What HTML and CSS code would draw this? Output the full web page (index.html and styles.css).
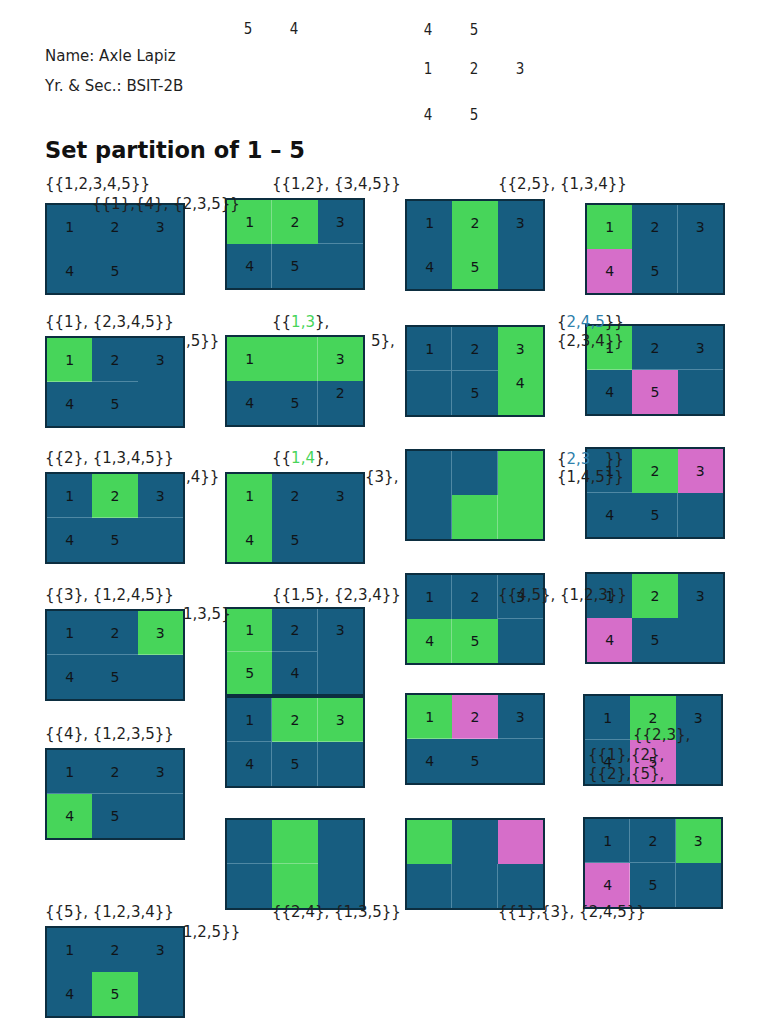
FILE: index.html
```html
<!DOCTYPE html>
<html lang="en">
<head>
<meta charset="utf-8">
<title>Set partition of 1 – 5</title>
<link rel="stylesheet" href="styles.css">
</head>
<body>
<div class="page">
  <div class="ghost gA"><span>5</span><span>4</span></div>
  <div class="ghost gB"><span>4</span><span>5</span></div>
  <div class="ghost gC"><span>1</span><span>2</span><span>3</span></div>
  <div class="ghost gD"><span>4</span><span>5</span></div>

  <header class="info">
    <p class="line">Name: Axle Lapiz</p>
    <p class="line">Yr. &amp; Sec.: BSIT-2B</p>
    <h1 class="title">Set partition of 1 – 5</h1>
  </header>

  <section class="board">
    <div class="col">
      <div class="box m38"><i class="cell">1</i><i class="cell">2</i><i class="cell">3</i><i class="cell">4</i><i class="cell">5</i><i class="cell"></i></div>
      <div class="box m41"><i class="cell g b">1</i><i class="cell b">2</i><i class="cell">3</i><i class="cell">4</i><i class="cell">5</i><i class="cell"></i></div>
      <div class="box m44"><i class="cell b">1</i><i class="cell g b">2</i><i class="cell b">3</i><i class="cell">4</i><i class="cell">5</i><i class="cell"></i></div>
      <div class="box m45"><i class="cell b">1</i><i class="cell b">2</i><i class="cell g b">3</i><i class="cell">4</i><i class="cell">5</i><i class="cell"></i></div>
      <div class="box m47"><i class="cell b">1</i><i class="cell b">2</i><i class="cell b">3</i><i class="cell g">4</i><i class="cell">5</i><i class="cell"></i></div>
      <div class="box m86"><i class="cell">1</i><i class="cell">2</i><i class="cell">3</i><i class="cell">4</i><i class="cell g">5</i><i class="cell"></i></div>
    </div>

    <div class="col">
      <div class="box m33"><i class="cell g r">1</i><i class="cell g">2</i><i class="cell b">3</i><i class="cell r">4</i><i class="cell">5</i><i class="cell"></i></div>
      <div class="box m45"><i class="cell g">1</i><i class="cell g r"></i><i class="cell g">3</i><i class="cell">4</i><i class="cell r">5</i><i class="cell up">2</i></div>
      <div class="box m45"><i class="cell g">1</i><i class="cell">2</i><i class="cell">3</i><i class="cell g">4</i><i class="cell">5</i><i class="cell"></i></div>
      <div class="box short m43"><i class="cell g b">1</i><i class="cell rb">2</i><i class="cell">3</i><i class="cell g">5</i><i class="cell r">4</i><i class="cell"></i></div>
      <div class="box"><i class="cell rb">1</i><i class="cell g rb">2</i><i class="cell g b">3</i><i class="cell r">4</i><i class="cell r">5</i><i class="cell"></i></div>
      <div class="box m30"><i class="cell b"></i><i class="cell g b"></i><i class="cell"></i><i class="cell"></i><i class="cell g"></i><i class="cell"></i></div>
    </div>

    <div class="col">
      <div class="box m34"><i class="cell">1</i><i class="cell g">2</i><i class="cell">3</i><i class="cell">4</i><i class="cell g">5</i><i class="cell"></i></div>
      <div class="box m34"><i class="cell rb">1</i><i class="cell b">2</i><i class="cell g">3</i><i class="cell r"></i><i class="cell">5</i><i class="cell g up">4</i></div>
      <div class="box m32"><i class="cell r"></i><i class="cell r"></i><i class="cell g"></i><i class="cell r"></i><i class="cell g r"></i><i class="cell g"></i></div>
      <div class="box m32"><i class="cell r">1</i><i class="cell r">2</i><i class="cell b">3</i><i class="cell g r">4</i><i class="cell g">5</i><i class="cell"></i></div>
      <div class="box m28"><i class="cell g b">1</i><i class="cell p b">2</i><i class="cell b">3</i><i class="cell">4</i><i class="cell">5</i><i class="cell"></i></div>
      <div class="box m33"><i class="cell g"></i><i class="cell"></i><i class="cell p"></i><i class="cell r"></i><i class="cell r"></i><i class="cell"></i></div>
    </div>

    <div class="col">
      <div class="box m38"><i class="cell g">1</i><i class="cell r">2</i><i class="cell">3</i><i class="cell p">4</i><i class="cell r">5</i><i class="cell"></i></div>
      <div class="box m29"><i class="cell g b">1</i><i class="cell b">2</i><i class="cell b">3</i><i class="cell">4</i><i class="cell p">5</i><i class="cell"></i></div>
      <div class="box m31"><i class="cell b">1</i><i class="cell g">2</i><i class="cell p">3</i><i class="cell">4</i><i class="cell r">5</i><i class="cell"></i></div>
      <div class="box m33"><i class="cell">1</i><i class="cell g">2</i><i class="cell">3</i><i class="cell p">4</i><i class="cell">5</i><i class="cell"></i></div>
      <div class="box m30 sl"><i class="cell b">1</i><i class="cell g">2</i><i class="cell">3</i><i class="cell">4</i><i class="cell p">5</i><i class="cell"></i></div>
      <div class="box m31 sl"><i class="cell rb">1</i><i class="cell rb">2</i><i class="cell g">3</i><i class="cell p r">4</i><i class="cell r">5</i><i class="cell"></i></div>
    </div>

    <span class="lbl l1">{{1,2,3,4,5}}</span>
    <span class="lbl l2">{{1,2}, {3,4,5}}</span>
    <span class="lbl l3">{{2,5}, {1,3,4}}</span>
    <span class="lbl l4">{{1},{4}, {2,3,5}}</span>
    <span class="lbl l5">{{1}, {2,3,4,5}}</span>
    <span class="lbl l6">,5}}</span>
    <span class="lbl l7">{{<em class="tg">1,3</em>},</span>
    <span class="lbl l8">5},</span>
    <span class="lbl l9">{<em class="tb">2,4,5</em>}}</span>
    <span class="lbl l10">{2,3,4}}</span>
    <span class="lbl l11">{{2}, {1,3,4,5}}</span>
    <span class="lbl l12">,4}}</span>
    <span class="lbl l13">{{<em class="tg">1,4</em>},</span>
    <span class="lbl l14">{3},</span>
    <span class="lbl l15">{<em class="tb">2,3</em><em class="tx">,5</em>}}</span>
    <span class="lbl l16">{1,4,5}}</span>
    <span class="lbl l17">{{3}, {1,2,4,5}}</span>
    <span class="lbl l18">1,3,5}</span>
    <span class="lbl l19">{{1,5}, {2,3,4}}</span>
    <span class="lbl l20">{{4,5}, {1,2,3}}</span>
    <span class="lbl l21">{{4}, {1,2,3,5}}</span>
    <span class="lbl l22">{{2,3},</span>
    <span class="lbl l23">{{1},{2},</span>
    <span class="lbl l24">{{2},{5},</span>
    <span class="lbl l25">{{5}, {1,2,3,4}}</span>
    <span class="lbl l26">1,2,5}}</span>
    <span class="lbl l27">{{2,4}, {1,3,5}}</span>
    <span class="lbl l29">{{1},{3}, {2,4,5}}</span>
  </section>
</div>
</body>
</html>
```

FILE: styles.css
```css
html, body {
  margin: 0;
  padding: 0;
  background: #ffffff;
}

body {
  font-family: "DejaVu Sans", "Liberation Sans", sans-serif;
  color: #1f1f1f;
}

.page {
  position: relative;
  width: 768px;
  height: 1024px;
  overflow: hidden;
}

/* header */
.info {
  box-sizing: border-box;
  height: 165px;
  padding: 40px 0 0 45px;
}

.line {
  margin: 0;
  font-family: "DejaVu Sans Condensed", "DejaVu Sans", sans-serif;
  font-stretch: condensed;
  font-size: 16.7px;
  line-height: 30px;
}

.title {
  margin: 35px 0 0;
  font-family: "DejaVu Sans", sans-serif;
  font-weight: bold;
  font-size: 22.5px;
  line-height: 30px;
  color: #111;
}

/* stray digits floating at the top of the sheet */
.ghost {
  position: absolute;
  display: flex;
  font-family: "DejaVu Sans Condensed", "DejaVu Sans", sans-serif;
  font-stretch: condensed;
  font-size: 15px;
  line-height: 20px;
}

.ghost span {
  width: 46px;
  text-align: center;
}

.gA { left: 225px; top: 19px; }
.gB { left: 405px; top: 20px; }
.gC { left: 405px; top: 59px; }
.gD { left: 405px; top: 105px; }

/* board of partition diagrams */
.board {
  position: relative;
  z-index: 0;
  display: grid;
  grid-template-columns: repeat(4, 140px);
  column-gap: 40px;
  padding-left: 45px;
  align-items: start;
}

.col {
  display: flex;
  flex-direction: column;
}

.box {
  position: relative;
  z-index: 0;
  box-sizing: border-box;
  width: 140px;
  height: 92px;
  border: 2px solid #0c2e40;
  background: #175d80;
  display: grid;
  grid-template-columns: repeat(3, 1fr);
  grid-template-rows: repeat(2, 1fr);
}

.box.short { height: 89px; }
.box.sl { margin-left: -2px; }

.m28 { margin-top: 28px; }
.m29 { margin-top: 29px; }
.m30 { margin-top: 30px; }
.m31 { margin-top: 31px; }
.m32 { margin-top: 32px; }
.m33 { margin-top: 33px; }
.m34 { margin-top: 34px; }
.m38 { margin-top: 38px; }
.m41 { margin-top: 41px; }
.m43 { margin-top: 43px; }
.m44 { margin-top: 44px; }
.m45 { margin-top: 45px; }
.m47 { margin-top: 47px; }
.m86 { margin-top: 86px; }

.cell {
  display: flex;
  align-items: center;
  justify-content: center;
  font-style: normal;
  font-size: 14px;
  color: #101418;
  background: #175d80;
}

.cell.g { background: #47d55a; }
.cell.p { background: #d66ec9; }

.cell.r  { box-shadow: inset -1px 0 0 #4f88a4; }
.cell.b  { box-shadow: inset 0 -1px 0 #4f88a4; }
.cell.rb { box-shadow: inset -1px 0 0 #4f88a4, inset 0 -1px 0 #4f88a4; }
.cell.g.r  { box-shadow: inset -1px 0 0 #7fe08c; }
.cell.g.b  { box-shadow: inset 0 -1px 0 #7fe08c; }
.cell.g.rb { box-shadow: inset -1px 0 0 #7fe08c, inset 0 -1px 0 #7fe08c; }
.cell.p.b  { box-shadow: inset 0 -1px 0 #e29ad8; }
.cell.p.r  { box-shadow: inset -1px 0 0 #e29ad8; }

.cell.up { padding-bottom: 20px; box-sizing: border-box; }

/* labels lying over the diagrams */
.lbl {
  position: absolute;
  z-index: 1;
  font-size: 15px;
  line-height: 20px;
  white-space: pre;
  color: #1f1f1f;
}

.tg { font-style: normal; color: #47d55a; }
.tb { font-style: normal; color: #2f7fab; }
.tx { font-style: normal; color: transparent; }

.l1  { left: 45px;  top: 9px; }
.l2  { left: 272px; top: 9px; }
.l3  { left: 498px; top: 9px; }
.l4  { left: 92px;  top: 29px; }
.l5  { left: 45px;  top: 147px; }
.l6  { left: 186px; top: 166px; }
.l7  { left: 272px; top: 147px; }
.l8  { left: 371px; top: 166px; }
.l9  { left: 557px; top: 147px; }
.l10 { left: 557px; top: 166px; }
.l11 { left: 45px;  top: 283px; }
.l12 { left: 186px; top: 302px; }
.l13 { left: 272px; top: 283px; }
.l14 { left: 365px; top: 302px; }
.l15 { left: 557px; top: 284px; }
.l16 { left: 557px; top: 302px; }
.l17 { left: 45px;  top: 420px; }
.l18 { left: 183px; top: 439px; }
.l19 { left: 272px; top: 420px; }
.l20 { left: 498px; top: 420px; }
.l21 { left: 45px;  top: 559px; }
.l22 { left: 633px; top: 560px; }
.l23 { left: 588px; top: 580px; }
.l24 { left: 588px; top: 599px; }
.l25 { left: 45px;  top: 737px; }
.l26 { left: 183px; top: 757px; }
.l27 { left: 272px; top: 737px; }
.l29 { left: 498px; top: 737px; }
```
